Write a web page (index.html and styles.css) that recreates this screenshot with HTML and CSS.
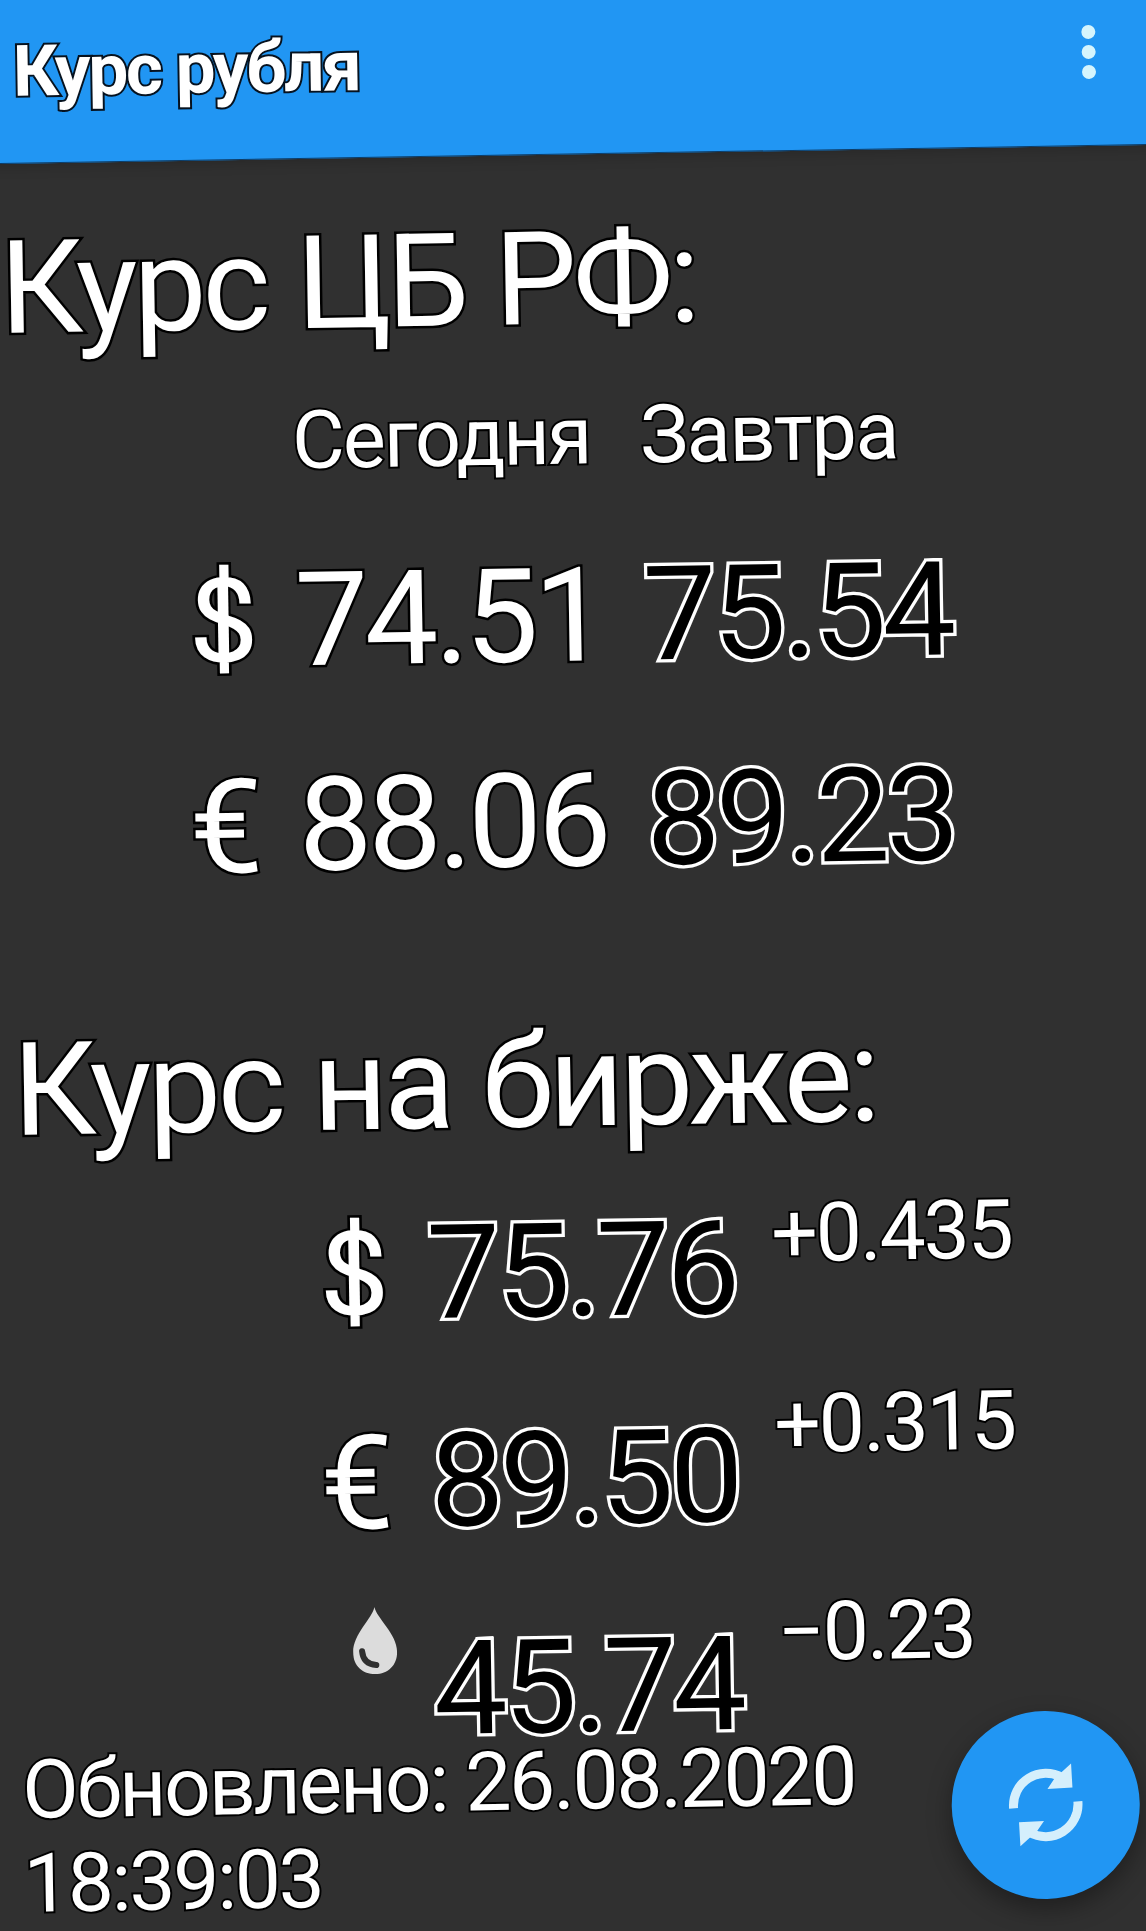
FILE: index.html
```
<!DOCTYPE html>
<html lang="ru">
<head>
	<meta charset="UTF-8" />
	<title>Курс рубля</title>
	<link rel="stylesheet" href="styles.css">
</head>
<body>
	<div class="screen">
		<header class="toolbar">
			<h1 class="title">Курс рубля</h1>
			<div class="menu">
				<span class="dot"></span>
				<span class="dot"></span>
				<span class="dot"></span>
			</div>
		</header>

		<h2 class="caption caption_cb">Курс ЦБ РФ:</h2>
		<div class="rates rates_cb">
			<div class="day day_today">Сегодня</div>
			<div class="day day_tomorrow">Завтра</div>

			<div class="sign dollar">$</div>
			<div class="value">74.51</div>
			<div class="value up">75.54</div>

			<div class="sign">€</div>
			<div class="value">88.06</div>
			<div class="value up">89.23</div>
		</div>

		<h2 class="caption caption_market">Курс на бирже:</h2>
		<div class="rates rates_market">
			<div class="sign dollar">$</div>
			<div class="value up">75.76</div>
			<div class="delta delta_first">+0.435</div>

			<div class="sign">€</div>
			<div class="value up">89.50</div>
			<div class="delta">+0.315</div>

			<svg class="drop" viewBox="0 0 44 67">
				<path fill="#dcdcdc" d="M22 0C24 11 44 27 44 45C44 59 34 67 22 67S0 59 0 45C0 27 20 11 22 0Z" />
				<path fill="none" stroke="#303030" stroke-width="6" stroke-linecap="round" d="M9 44Q10 57 23 58" />
			</svg>
			<div class="value up">45.74</div>
			<div class="delta">−0.23</div>
		</div>

		<div class="updated">Обновлено: 26.08.2020<br>18:39:03</div>

		<div class="refresh">
			<svg class="refresh_icon" viewBox="0 0 84 84">
				<path fill="none" stroke="#d5effc" stroke-width="9" d="M9.8 45A32.4 32.4 0 0 1 59 15M74.2 39A32.4 32.4 0 0 1 25 69" />
				<path fill="#d5effc" d="M68 1L69 25L44 26L51 16ZM16 83L15 59L40 58L33 68Z" />
			</svg>
		</div>
	</div>
</body>
</html>
```

FILE: styles.css
```
body{
    margin: 0;
    height: 1931px;
    overflow: hidden;
    background: #303030;
    color: #fff;
    font-family: Roboto, "Noto Sans", sans-serif;
}

/* the whole screen is slightly tilted */
.screen{
    display: flow-root;
    position: relative;
    width: 1146px;
    height: 1931px;
    transform: rotate(-0.95deg);
    transform-origin: 0 -40px;
    -webkit-text-stroke: 5px #000;
    paint-order: stroke fill;
}

.toolbar{
    display: flex;
    justify-content: space-between;
    height: 163px;
    margin: -40px -40px 0;
    padding: 40px 92px 0 51px;
    background: #2196f3;
    border-bottom: 1px solid #0d3c66;
    box-shadow: 0 2px 14px rgba(0,0,0,.2);
}

.title{
    margin: 22px 0 0;
    font-size: 71px;
    line-height: 100px;
    letter-spacing: -2.4px;
    -webkit-text-stroke: 4px #06121f;
}

.menu{
    display: flex;
    flex-direction: column;
    gap: 6px;
    margin-top: 43px;
}

.dot{
    width: 14px;
    height: 14px;
    border-radius: 50%;
    background: #d5f5fd;
}

.caption{
    margin: 0 0 0 -6px;
    font-size: 130px;
    font-weight: normal;
    line-height: 150px;
    letter-spacing: -4.2px;
    word-spacing: 2px;
    white-space: nowrap;
}

.caption_cb{
    padding: 50px 0 32px;
}

.caption_market{
    padding: 111px 0 39px;
    letter-spacing: -3.6px;
}

.rates{
    display: grid;
    grid-auto-rows: 150px;
    font-size: 131px;
    line-height: 150px;
    letter-spacing: -4px;
}

.rates_cb{
    grid-template-columns: 107px 348px 400px;
    grid-template-rows: 99px;
    row-gap: 55px;
    padding-left: 177px;
}

.rates_market{
    grid-template-columns: 108px 345px 300px;
    row-gap: 58px;
    padding-left: 297px;
}

.day{
    font-size: 81px;
    line-height: 100px;
    letter-spacing: -2px;
    -webkit-text-stroke: 4px #000;
}

.day_today{
    grid-column: 2;
}

.day_tomorrow{
    letter-spacing: -1.4px;
}

.sign{
    margin: 1px 0 0 -2px;
}

/* dollar with a solid bar through the letter */
.dollar{
    position: relative;
    isolation: isolate;
    justify-self: start;
    margin: 0;
    font-size: 117px;
    letter-spacing: 0;
    transform: scaleX(1.07);
    transform-origin: 0 0;
}

.dollar::before,
.dollar::after{
    content: "";
    position: absolute;
    left: 50%;
    top: 34px;
    width: 10px;
    height: 76px;
    margin-left: -5px;
    background: #fff;
}

.dollar::before{
    z-index: -1;
    width: 15px;
    margin-left: -7.5px;
    background: #000;
}

.up{
    color: #000;
    -webkit-text-stroke: 6.5px #fff;
}

.delta{
    margin-top: -26px;
    font-size: 82px;
    line-height: 100px;
    letter-spacing: -2px;
    -webkit-text-stroke: 4px #000;
}

.delta_first{
    margin-top: -9px;
}

.drop{
    width: 44px;
    height: 67px;
    margin: -8px 0 0 28px;
}

.updated{
    margin: -28px 0 0 -8px;
    font-size: 82px;
    line-height: 94px;
    letter-spacing: -2.2px;
    -webkit-text-stroke: 4px #000;
}

.refresh{
    position: absolute;
    left: 921px;
    top: 1728px;
    display: flex;
    align-items: center;
    justify-content: center;
    width: 188px;
    height: 188px;
    border-radius: 50%;
    background: #2196f3;
    box-shadow: 0 10px 24px rgba(0,0,0,.35);
}

.refresh_icon{
    width: 84px;
    height: 84px;
}
```
